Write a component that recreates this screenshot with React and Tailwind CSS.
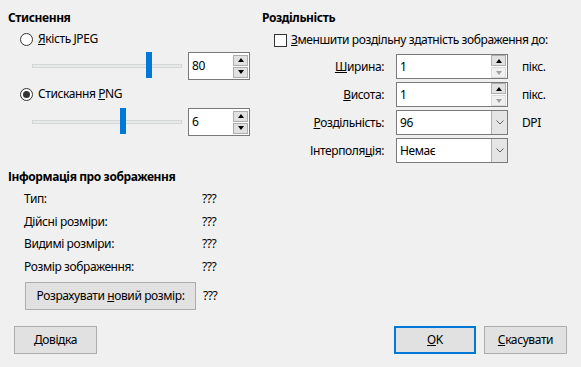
import { useState } from 'react';

function Radio({ checked }) {
  return (
    <span className="w-[13px] h-[13px] rounded-full border border-[#333] bg-white flex items-center justify-center shrink-0">
      {checked && <span className="w-[7px] h-[7px] rounded-full bg-[#333]" />}
    </span>
  );
}

function SpinButtons({ downDisabled }) {
  return (
    <div className="flex flex-col gap-[1px] w-[15px] shrink-0">
      <div className="h-[11px] border border-[#adadad] bg-[#e1e1e1] flex items-center justify-center">
        <span className="w-0 h-0 border-l-[3.5px] border-r-[3.5px] border-b-[4px] border-l-transparent border-r-transparent border-b-black" />
      </div>
      <div
        className={`h-[11px] border flex items-center justify-center ${downDisabled ? 'border-[#dadada] bg-[#f0f0f0]' : 'border-[#adadad] bg-[#e1e1e1]'}`}
      >
        <span
          className={`w-0 h-0 border-l-[3.5px] border-r-[3.5px] border-t-[4px] border-l-transparent border-r-transparent ${downDisabled ? 'border-t-[#a0a0a0]' : 'border-t-black'}`}
        />
      </div>
    </div>
  );
}

function Slider({ value }) {
  return (
    <div className="relative w-[150px] h-[28px] flex items-center">
      <div className="w-full h-[4px] bg-[#e7eaea] border border-[#d6d6d6]" />
      <div className="absolute top-0 w-[6px] h-[26px] bg-[#0078d7]" style={{ left: `${value}px` }} />
    </div>
  );
}

function SliderRow({ thumb, value }) {
  return (
    <div className="flex items-center ml-[24px] gap-[6px]">
      <Slider value={thumb} />
      <div className="w-[62px] h-[28px] border border-[#7a7a7a] bg-white flex items-center justify-between pl-[3px] pr-[1px]">
        <span>{value}</span>
        <SpinButtons />
      </div>
    </div>
  );
}

function Field({ label, children, unit }) {
  return (
    <div className="flex items-center h-[25px]">
      <div className="w-[122px] text-right">{label}</div>
      <div className="ml-[12px] w-[112px] h-[25px] border border-[#7a7a7a] bg-white flex items-center justify-between pl-[3px]">
        {children}
      </div>
      {unit && <span className="ml-[14px]">{unit}</span>}
    </div>
  );
}

function ComboButton() {
  return (
    <div className="w-[16px] h-full bg-[#e5e5e5] border-l border-[#adadad] flex items-center justify-center">
      <svg width="8" height="5" viewBox="0 0 8 5">
        <polyline points="0.5,0.5 4,4 7.5,0.5" fill="none" stroke="#606060" strokeWidth="1" />
      </svg>
    </div>
  );
}

function Btn({ children, className = '', border = 'border border-[#adadad]' }) {
  return (
    <button className={`h-[28px] bg-[#e1e1e1] flex items-center justify-center ${border} ${className}`}>
      <span>{children}</span>
    </button>
  );
}

export default function App() {
  const [mode] = useState('png');

  return (
    <div className="w-[581px] h-[367px] bg-[#f0f0f0] text-black text-[12px] leading-[16px] tracking-[-0.4px] font-['Noto_Sans',sans-serif] pt-[10px] overflow-hidden">
      {/* Top: compression + resolution */}
      <div className="flex">
        <div className="w-[254px] pl-[8px]">
          <div className="font-bold h-[16px]">Стиснення</div>
          <div className="flex items-center gap-[5px] ml-[12px] mt-[5px] h-[16px]">
            <Radio checked={mode === 'jpeg'} />
            <span><u>Я</u>кість JPEG</span>
          </div>
          <div className="mt-[5px]">
            <SliderRow thumb={114} value="80" />
          </div>
          <div className="flex items-center gap-[5px] ml-[12px] mt-[6px] h-[16px]">
            <Radio checked={mode === 'png'} />
            <span>Стискання <u>P</u>NG</span>
          </div>
          <div className="mt-[6px]">
            <SliderRow thumb={88} value="6" />
          </div>
        </div>

        <div className="pl-[8px]">
          <div className="font-bold h-[16px]">Роздільність</div>
          <div className="flex items-center gap-[4px] ml-[12px] mt-[6px] h-[16px]">
            <span className="w-[13px] h-[13px] border border-[#333] bg-white shrink-0" />
            <span><u>З</u>меншити роздільну здатність зображення до:</span>
          </div>
          <div className="mt-[6px] flex flex-col gap-[3px]">
            <Field label={<><u>Ш</u>ирина:</>} unit="пікс.">
              <span>1</span>
              <div className="pr-[1px]"><SpinButtons downDisabled /></div>
            </Field>
            <Field label={<><u>В</u>исота:</>} unit="пікс.">
              <span>1</span>
              <div className="pr-[1px]"><SpinButtons downDisabled /></div>
            </Field>
            <Field label={<><u>Р</u>оздільність:</>} unit="DPI">
              <span>96</span>
              <ComboButton />
            </Field>
            <Field label={<>Інтерполя<u>ц</u>ія:</>}>
              <span>Немає</span>
              <ComboButton />
            </Field>
          </div>
        </div>
      </div>

      {/* Image info */}
      <div className="pl-[8px] mt-[6px]">
        <div className="font-bold h-[16px]">Інформація про зображення</div>
        <div className="mt-[3px] ml-[16px]">
          {['Тип:', 'Дійсні розміри:', 'Видимі розміри:', 'Розмір зображення:'].map((l) => (
            <div key={l} className="flex h-[22.5px] items-center">
              <span className="w-[178px]">{l}</span>
              <span>???</span>
            </div>
          ))}
          <div className="flex items-center mt-[4px]">
            <Btn className="w-[171px] h-[26px] ml-[1px]">
              Розрахувати <u>н</u>овий розмір:
            </Btn>
            <span className="ml-[7px]">???</span>
          </div>
        </div>
      </div>

      {/* Buttons */}
      <div className="flex items-center justify-between px-[14px] mt-[16px]">
        <Btn className="w-[83px]"><u>Д</u>овідка</Btn>
        <div className="flex gap-[8px]">
          <Btn className="w-[82px]" border="border-2 border-[#0078d7]"><u>О</u>K</Btn>
          <Btn className="w-[83px]"><u>С</u>касувати</Btn>
        </div>
      </div>
    </div>
  );
}
